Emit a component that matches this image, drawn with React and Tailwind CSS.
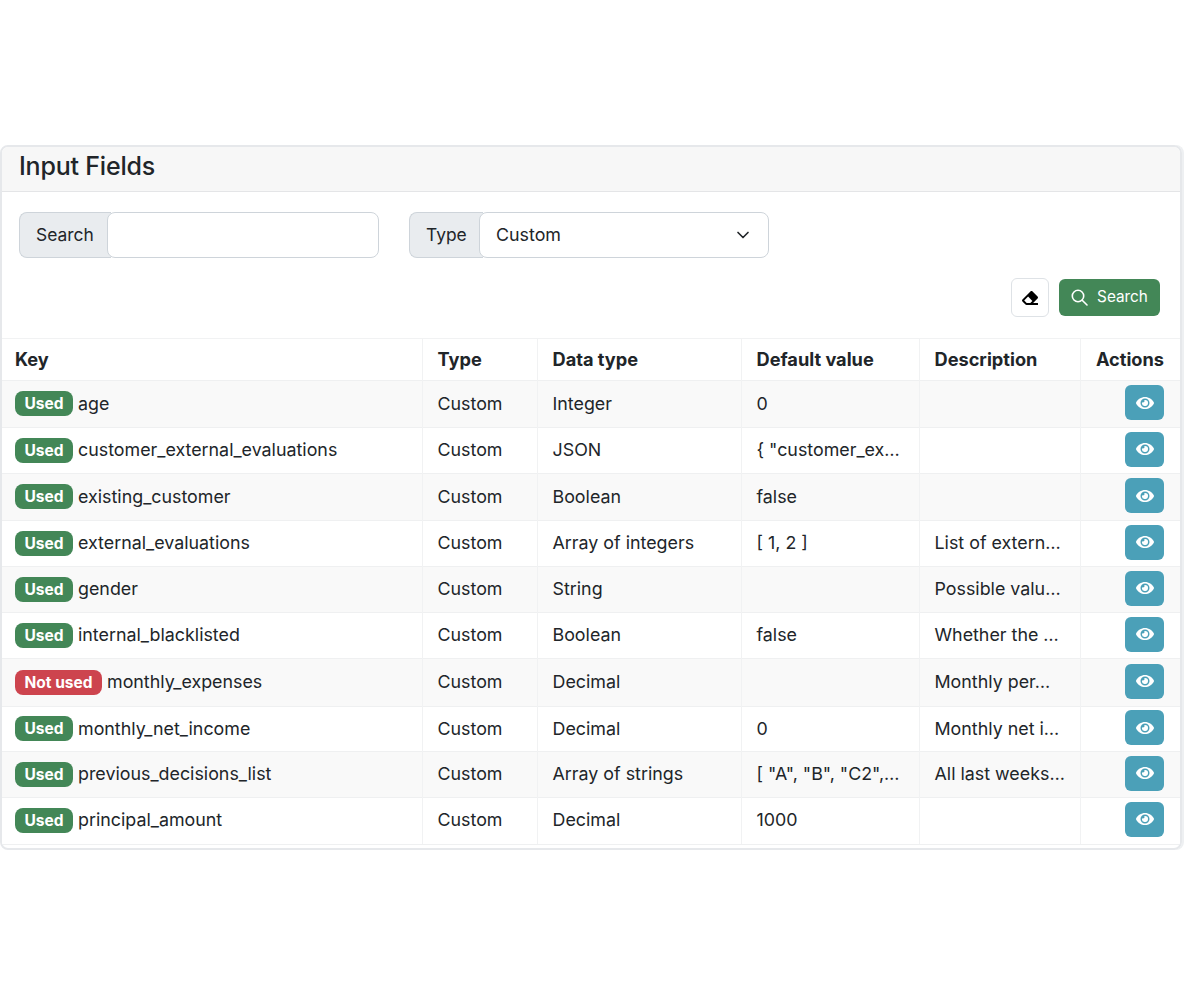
import React from 'react';
import { FaEye, FaEraser } from 'react-icons/fa';
import { ChevronDown } from 'lucide-react';

const rows = [
  { key: 'age', used: true, dataType: 'Integer', def: '0', desc: '', h: 'h-[47px]' },
  { key: 'customer_external_evaluations', used: true, dataType: 'JSON', def: '{ "customer_ex…', desc: '', h: 'h-[46px]' },
  { key: 'existing_customer', used: true, dataType: 'Boolean', def: 'false', desc: '', h: 'h-[47px]' },
  { key: 'external_evaluations', used: true, dataType: 'Array of integers', def: '[ 1, 2 ]', desc: 'List of extern…', h: 'h-[46px]' },
  { key: 'gender', used: true, dataType: 'String', def: '', desc: 'Possible valu…', h: 'h-[46px]' },
  { key: 'internal_blacklisted', used: true, dataType: 'Boolean', def: 'false', desc: 'Whether the …', h: 'h-[46px]' },
  { key: 'monthly_expenses', used: false, dataType: 'Decimal', def: '', desc: 'Monthly per…', h: 'h-[48px]' },
  { key: 'monthly_net_income', used: true, dataType: 'Decimal', def: '0', desc: 'Monthly net i…', h: 'h-[45px]' },
  { key: 'previous_decisions_list', used: true, dataType: 'Array of strings', def: '[ "A", "B", "C2",…', desc: 'All last weeks…', h: 'h-[46px]' },
  { key: 'principal_amount', used: true, dataType: 'Decimal', def: '1000', desc: '', h: 'h-[46px]' },
];

const headers = ['Key', 'Type', 'Data type', 'Default value', 'Description'];

const App = () => {
  return (
    <div className="min-h-[992px] bg-white pt-[145px] text-[#212529] font-['Inter',sans-serif] text-[17.85px]">
      <div className="w-[1182px] rounded-lg border-2 border-[#e6e8eb] overflow-hidden shadow-[2px_0_0_#eef0f2]">
        <div className="h-[45px] bg-[#f7f7f7] border-b border-[#e4e5e7] pl-[17px] text-[25px] leading-[38px] font-medium tracking-[-0.2px]">
          Input Fields
        </div>

        <div className="px-[17px] pt-5 flex gap-[30px]">
          <div className="flex w-[360px] h-[46px]">
            <span className="w-[92px] pl-4 flex items-center bg-[#e9ecef] border border-[#ced4da] rounded-l-lg border-r-0 text-[17.4px]">Search</span>
            <div className="flex-1 -ml-1 bg-white border border-[#ced4da] rounded-lg"></div>
          </div>
          <div className="flex w-[360px] h-[46px]">
            <span className="w-[74px] pl-4 flex items-center bg-[#e9ecef] border border-[#ced4da] rounded-l-lg border-r-0 text-[17.4px]">Type</span>
            <div className="flex-1 -ml-1 pl-4 pr-[15px] flex items-center justify-between bg-white border border-[#ced4da] rounded-lg text-[17.85px]">
              Custom
              <ChevronDown size={20} strokeWidth={2} />
            </div>
          </div>
        </div>

        <div className="pr-5 pt-5 pb-[21px] flex justify-end items-center gap-[10px]">
          <button className="w-[38px] h-[39px] flex items-center justify-center bg-white border border-[#dee2e6] rounded-md text-black">
            <FaEraser size={16} />
          </button>
          <button className="w-[101px] h-[37px] flex items-center justify-center gap-[9px] bg-[#438757] text-white rounded-md text-[15.3px]">
            <svg width="17" height="17" viewBox="0 0 17 17" fill="none" stroke="currentColor" strokeWidth="1.6" strokeLinecap="round">
              <circle cx="7" cy="7" r="5.7" />
              <line x1="11.2" y1="11.2" x2="16" y2="16" />
            </svg>
            Search
          </button>
        </div>

        <table className="w-full table-fixed border-collapse">
          <colgroup>
            <col className="w-[420px]" />
            <col className="w-[115px]" />
            <col className="w-[204px]" />
            <col className="w-[178px]" />
            <col className="w-[161px]" />
            <col />
          </colgroup>
          <thead>
            <tr className="h-[42px] border-t border-[#f1f2f3]">
              {headers.map((h) => (
                <th key={h} className="pl-[13px] text-left font-bold text-[18.2px] border-r border-[#f1f2f3]">
                  <span className={h === 'Key' ? '' : 'pl-[2px]'}>{h}</span>
                </th>
              ))}
              <th className="text-right pr-[16px] font-bold text-[18.2px]">Actions</th>
            </tr>
          </thead>
          <tbody>
            {rows.map((r, i) => (
              <tr key={r.key} className={`border-t border-[#eff0f1] ${r.h} ${i % 2 === 0 ? 'bg-[#f9f9f9]' : 'bg-white'}`}>
                <td className="pl-[13px] border-r border-[#f1f2f3]">
                  <div className="flex items-center gap-[5px]">
                    {r.used ? (
                      <span className="h-[25px] w-[58px] flex items-center justify-center rounded-lg bg-[#438757] text-white text-[15.5px] font-bold">Used</span>
                    ) : (
                      <span className="h-[25px] w-[87px] flex items-center justify-center rounded-lg bg-[#cd444e] text-white text-[15.5px] font-bold">Not used</span>
                    )}
                    <span>{r.key}</span>
                  </div>
                </td>
                <td className="pl-[15px] border-r border-[#f1f2f3]">Custom</td>
                <td className="pl-[15px] border-r border-[#f1f2f3]">{r.dataType}</td>
                <td className="pl-[15px] border-r border-[#f1f2f3] whitespace-nowrap">{r.def}</td>
                <td className="pl-[15px] border-r border-[#f1f2f3] whitespace-nowrap">{r.desc}</td>
                <td>
                  <div className="flex justify-end pr-[16px] pb-[3px]">
                    <button className="w-[39px] h-[35px] flex items-center justify-center rounded-md bg-[#4ba0b8] text-white">
                      <FaEye size={18} />
                    </button>
                  </div>
                </td>
              </tr>
            ))}
          </tbody>
        </table>
        <div className="h-[4px] border-t border-[#eff0f1]"></div>
      </div>
    </div>
  );
};

export default App;
